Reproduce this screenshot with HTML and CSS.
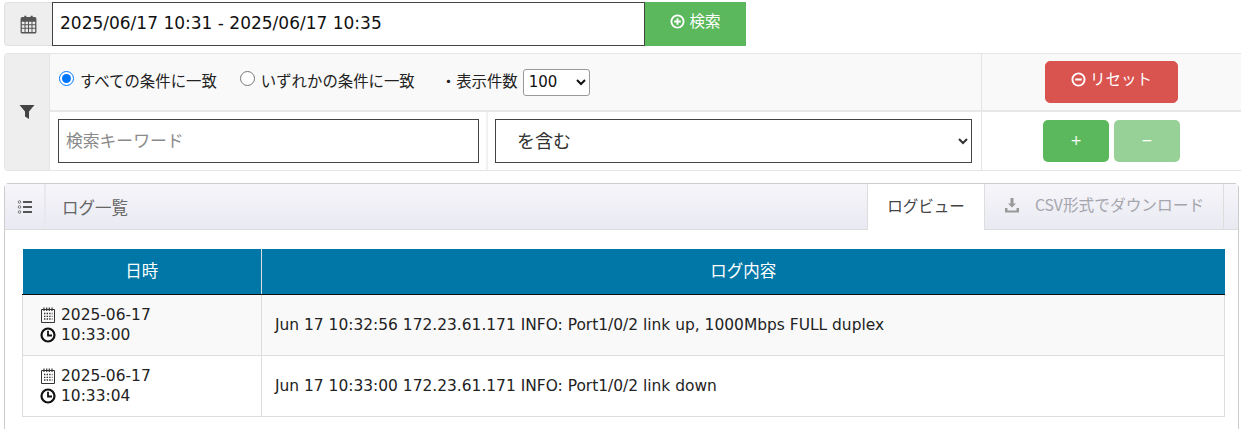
FILE: index.html
```html
<!DOCTYPE html>
<html lang="ja">
<head>
<meta charset="utf-8">
<title>ログ一覧</title>
<link rel="stylesheet" href="styles.css">
</head>
<body>
<div class="search-bar">
  <span class="addon">
    <svg class="ico-cal" viewBox="0 0 18 18" width="19" height="19"><path fill="#555" d="M3 2h2V0.8h2V2h4V0.8h2V2h2a1.5 1.5 0 0 1 1.5 1.5V16A1.5 1.5 0 0 1 15 17.500H3A1.500 1.500 0 0 1 1.500 16V3.500A1.500 1.500 0 0 1 3 2z"/><path fill="#eee" d="M2.700 6.500h2.500v2.300H2.700zM6.200 6.500h2.300v2.300H6.200zM9.500 6.500h2.300v2.300H9.500zM12.800 6.500h2.500v2.300h-2.500zM2.700 9.700h2.500V12H2.700zM6.200 9.700h2.300V12H6.200zM9.500 9.700h2.300V12H9.500zM12.800 9.700h2.500V12h-2.500zM2.700 13h2.500v3H2.700zM6.200 13h2.300v3H6.200zM9.500 13h2.300v3H9.500zM12.800 13h2.500v3h-2.500z"/></svg>
  </span>
  <input class="range" type="text" value="2025/06/17 10:31 - 2025/06/17 10:35">
  <button class="btn-search" type="button">
    <svg class="ico-btn" viewBox="0 0 16 16" width="15" height="15"><circle cx="8" cy="8" r="6.500" fill="none" stroke="#fff" stroke-width="2"/><path stroke="#fff" stroke-width="2" d="M8 4.500v7M4.500 8h7"/></svg><span class="lift">検索</span>
  </button>
</div>

<div class="filter">
  <div class="filter-icon">
    <svg viewBox="0 0 16 16" width="16" height="16"><path fill="#444" d="M0.500 1h15L10 7.500V15L6 12.500V7.500z"/></svg>
  </div>
  <div class="cell options">
    <label class="opt"><input type="radio" name="m" checked>すべての条件に一致</label>
    <label class="opt opt-2"><input type="radio" name="m">いずれかの条件に一致</label>
    <span class="count-label">・表示件数</span>
    <select class="count"><option>100</option></select>
  </div>
  <div class="cell action">
    <button class="btn-reset" type="button">
      <svg class="ico-btn" viewBox="0 0 16 16" width="15" height="15"><circle cx="8" cy="8" r="6.500" fill="none" stroke="#fff" stroke-width="2"/><path stroke="#fff" stroke-width="2.200" d="M4.500 8h7"/></svg><span class="lift">リセット</span>
    </button>
  </div>
  <div class="cell kw"><input class="keyword" type="text" placeholder="検索キーワード"></div>
  <div class="cell cond"><select class="match"><option>を含む</option></select></div>
  <div class="cell action pm">
    <button class="btn-pm" type="button">+</button>
    <button class="btn-pm off" type="button">−</button>
  </div>
</div>

<section class="panel">
  <header class="panel-head">
    <span class="list-ico">
      <svg viewBox="0 0 16 16" width="16" height="16"><g fill="none" stroke="#777"><circle cx="2.500" cy="3" r="1.300"/><circle cx="2.500" cy="8" r="1.300"/><circle cx="2.500" cy="13" r="1.300"/></g><path stroke="#555" stroke-width="2" d="M6 3h9M6 8h9M6 13h9"/></svg>
    </span>
    <span class="panel-title">ログ一覧</span>
    <span class="tab active">ログビュー</span>
    <span class="tab dl">
      <svg viewBox="0 0 16 16" width="16" height="16"><path fill="#999" d="M6.500 1h3v5.500H12L8 10.500 4 6.500h2.500zM1 11h2.500v2.500h9V11H15v4.500H1z"/></svg>
      CSV形式でダウンロード
    </span>
    <span class="tab-end"></span>
  </header>
  <div class="panel-body">
    <table class="log">
      <thead><tr><th class="c-date">日時</th><th>ログ内容</th></tr></thead>
      <tbody>
        <tr class="odd">
          <td class="c-date">
            <div class="dt"><svg viewBox="0 0 16 16" width="16" height="16"><use href="#cal"/></svg>2025-06-17</div>
            <div class="dt"><svg viewBox="0 0 16 16" width="16" height="16"><use href="#clock"/></svg>10:33:00</div>
          </td>
          <td>Jun 17 10:32:56 172.23.61.171 INFO: Port1/0/2 link up, 1000Mbps FULL duplex</td>
        </tr>
        <tr>
          <td class="c-date">
            <div class="dt"><svg viewBox="0 0 16 16" width="16" height="16"><use href="#cal"/></svg>2025-06-17</div>
            <div class="dt"><svg viewBox="0 0 16 16" width="16" height="16"><use href="#clock"/></svg>10:33:04</div>
          </td>
          <td>Jun 17 10:33:00 172.23.61.171 INFO: Port1/0/2 link down</td>
        </tr>
      </tbody>
    </table>
  </div>
</section>

<svg class="defs" width="0" height="0">
  <symbol id="cal" viewBox="0 0 16 16">
    <path fill="none" stroke="#333" d="M1.500 2.500h13v13h-13z"/>
    <path stroke="#333" stroke-width="1.200" d="M4 .5v3.500M6.700 .5v3.500M9.300 .5v3.500M12 .5v3.500"/>
    <path stroke="#333" stroke-width="1.300" stroke-dasharray="1.400 1.200" d="M4 6.500h8.500M4 9.300h8.500M4 12h8.500"/>
  </symbol>
  <symbol id="clock" viewBox="0 0 16 16">
    <circle cx="8" cy="8" r="6.500" fill="none" stroke="#111" stroke-width="2.200"/>
    <path fill="none" stroke="#111" stroke-width="1.800" d="M8 3.800V8.500h4"/>
  </symbol>
</svg>
</body>
</html>
```
FILE: styles.css
```css
* { box-sizing: border-box; }
html, body { margin: 0; padding: 0; }
body {
  width: 1241px;
  height: 429px;
  overflow: hidden;
  padding: 2px 0 0 4px;
  background: #fff;
  color: #333;
  font-family: "DejaVu Sans", "Noto Sans CJK JP", sans-serif;
  font-size: 14px;
}
button, input, select { font-family: inherit; }

.search-bar { display: flex; height: 44px; width: 742px; }
.addon {
  width: 48px;
  display: flex;
  align-items: center;
  justify-content: center;
  background: #eee;
  border: 1px solid #e0e0e0;
  border-right: 0;
  border-radius: 4px 0 0 4px;
}
.range {
  flex: 1;
  min-width: 0;
  border: 1px solid #444;
  padding: 0 7px 2px;
  font-size: 17px;
  color: #111;
  outline: 0;
  border-radius: 0;
}
.btn-search {
  width: 101px;
  border: 0;
  background: #5cb85c;
  color: #fff;
  font-size: 15.5px;
  font-family: "Noto Sans CJK JP", sans-serif;
  display: flex;
  align-items: center;
  justify-content: center;
  gap: 4px;
  padding: 0 0 5px;
}
.lift { margin-bottom: 3px; }
.ico-btn { display: block; }

.filter {
  margin-top: 7px;
  display: grid;
  grid-template-columns: 45px 438px 494px 259px;
  grid-template-rows: 58px 58px;
  width: 1237px;
  height: 118px;
  border: 1px solid #e4e4e4;
  border-right: 0;
  border-radius: 4px 0 0 4px;
  margin-bottom: 12px;
}
.filter-icon {
  grid-row: 1 / 3;
  background: #eee;
  display: flex;
  align-items: center;
  justify-content: center;
  border-right: 1px solid #e4e4e4;
}
.cell { display: flex; align-items: center; }
.options {
  grid-column: 2 / 4;
  background: #f9f9f9;
  padding-left: 9px;
  border-right: 1px solid #e4e4e4;
  border-bottom: 2px solid #e8e8e8;
  font-size: 15.4px;
  color: #222;
  font-family: "Noto Sans CJK JP", sans-serif;
}
.opt { display: flex; align-items: center; margin-bottom: 4px; }
.opt input { margin: 0 6px 4px 0; width: 15px; height: 15px; accent-color: #0075ff; }
.opt-2 { margin-left: 23px; }
.count-label { margin-left: 26px; margin-bottom: 4px; }
.count {
  margin-left: 5px;
  width: 67px;
  height: 27px;
  font-size: 15px;
  font-family: "DejaVu Sans", sans-serif;
  border: 1px solid #999;
  border-radius: 3px;
  background: #fff;
  color: #111;
  padding-left: 1px;
}
.action { justify-content: center; }
.options + .action { background: #f9f9f9; border-bottom: 2px solid #e8e8e8; }
.btn-reset {
  width: 133px;
  height: 42px;
  border: 1px solid #d9534f;
  border-radius: 5px;
  background: #d9534f;
  color: #fff;
  font-size: 15.5px;
  font-family: "Noto Sans CJK JP", sans-serif;
  display: flex;
  align-items: center;
  justify-content: center;
  gap: 4px;
  padding: 0 0 5px;
}
.kw { padding-left: 8px; border-right: 2px solid #f2f2f2; }
.keyword {
  width: 421px;
  height: 44px;
  border: 1px solid #444;
  padding: 0 7px 3px;
  font-size: 16.8px;
  outline: 0;
  font-family: "Noto Sans CJK JP", sans-serif;
}
.keyword::placeholder { color: #8a8a8a; }
.cond { padding-left: 7px; border-right: 1px solid #e4e4e4; }
.match {
  width: 477px;
  height: 44px;
  border: 1px solid #444;
  border-radius: 0;
  background: #fff;
  padding: 0 0 2px 17px;
  font-size: 18px;
  color: #333;
  font-family: "Noto Sans CJK JP", sans-serif;
}
.pm { gap: 5px; }
.btn-pm {
  width: 66px;
  height: 42px;
  border: 0;
  border-radius: 5px;
  background: #5cb85c;
  color: #fff;
  font-size: 14px;
  padding: 0 0 3px;
}
.btn-pm.off { background: #97d197; }

.panel {
  width: 1235px;
  height: 260px;
  border: 1px solid #ccc;
  border-bottom: 0;
  border-radius: 5px 5px 0 0;
}
.panel-head {
  display: flex;
  align-items: stretch;
  height: 46px;
  background: linear-gradient(#f6f6fa, #e9e9f2);
  border-bottom: 1px solid #ddd;
  font-family: "Noto Sans CJK JP", sans-serif;
  font-size: 15.5px;
}
.list-ico {
  width: 41px;
  display: flex;
  align-items: center;
  justify-content: center;
  border-right: 2px solid #e8e8ee;
}
.panel-title {
  flex: 1;
  display: flex;
  align-items: center;
  padding-left: 16px;
  color: #666;
  font-size: 16.500px;
}
.tab {
  display: flex;
  align-items: center;
  justify-content: center;
  padding-bottom: 4px;
}
.tab.active {
  width: 118px;
  background: #fff;
  height: 46px;
  border-left: 1px solid #ddd;
  border-right: 1px solid #ddd;
  color: #444;
}
.tab.dl { width: 238px; color: #a5a5ad; gap: 15px; font-size: 15.7px; }
.tab-end { width: 15px; border-left: 1px solid #ddd; }

.panel-body { padding: 19px 0 0 17px; }
.log {
  width: 1203px;
  border-collapse: collapse;
  table-layout: fixed;
  font-size: 15.45px;
  color: #222;
}
.log th {
  height: 45px;
  background: #0077a6;
  color: #fff;
  font-weight: 400;
  font-family: "Noto Sans CJK JP", sans-serif;
  font-size: 16.500px;
  border-left: 1px solid #ddd;
  border-bottom: 1px solid #111;
  padding: 0 0 3px;
}
.log th:first-child { border-left: 0; }
.log td {
  height: 61px;
  border: 1px solid #ddd;
  padding: 0 13px;
}
.log .c-date { width: 239px; }
.log td.c-date { padding-left: 17px; }
.odd td { background: #f9f9f9; }
.dt { display: flex; align-items: center; gap: 5px; line-height: 20px; height: 20px; color: #222; }
.defs { position: absolute; }
```
